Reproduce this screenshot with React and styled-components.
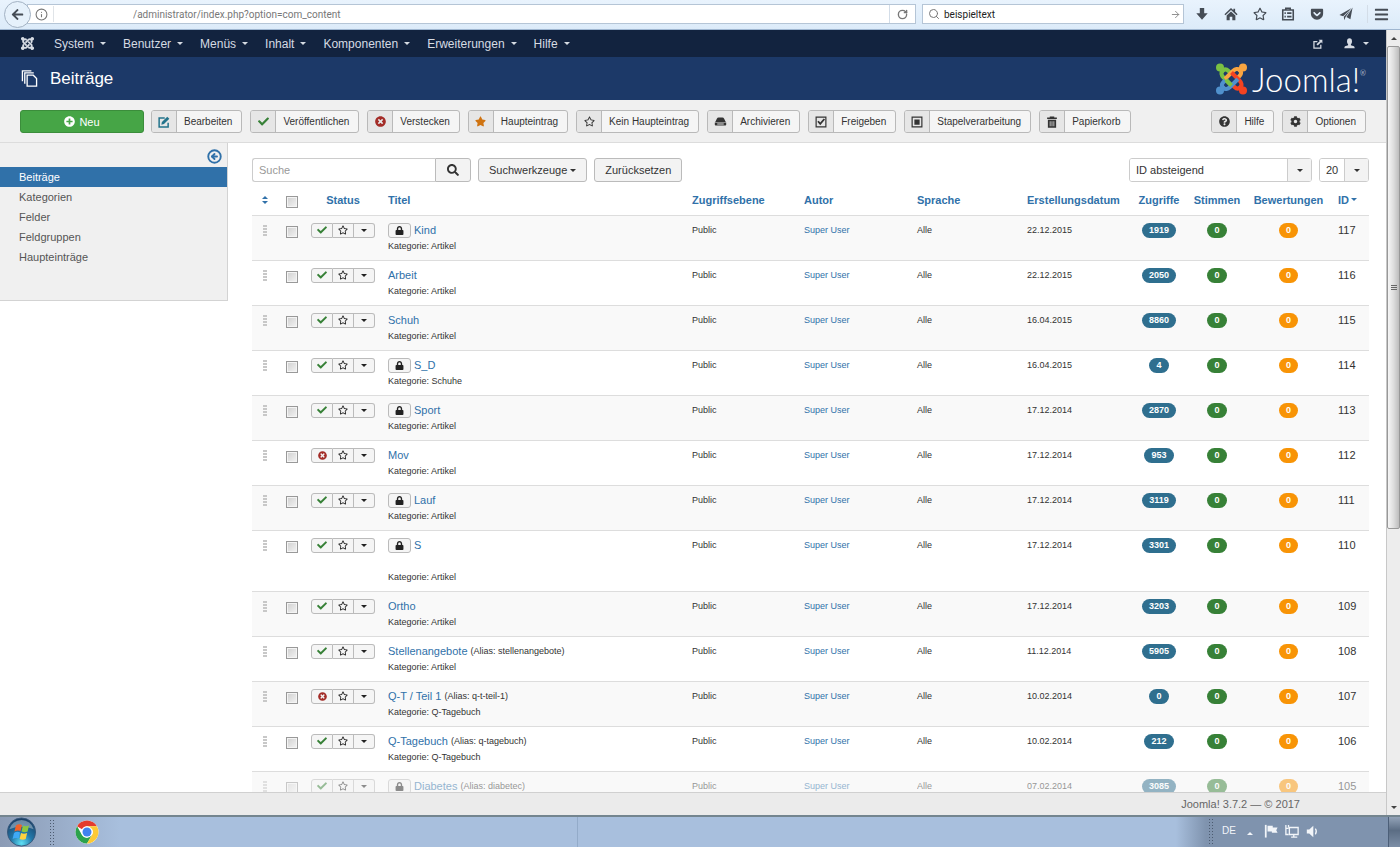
import React from 'react';
import styled, { createGlobalStyle } from 'styled-components';
import {
  FaArrowLeft,
  FaBars,
  FaCheck,
  FaCog,
  FaGetPocket,
  FaJoomla,
  FaLock,
  FaPlusCircle,
  FaQuestionCircle,
  FaRegStar,
  FaSearch,
  FaStar,
  FaTimesCircle,
} from 'react-icons/fa';
import { ArrowRight, CircleArrowLeft, Info, RotateCw, Search } from 'lucide-react';

const GlobalStyle = createGlobalStyle`
  * {
    box-sizing: border-box;
  }

  body {
    margin: 0;
    background: #fff;
    color: #333;
    font: 11px/16px "Liberation Sans", Arial, sans-serif;
  }

  button, input, select {
    margin: 0;
    font: inherit;
    color: inherit;
  }

  a {
    color: #3071a9;
    text-decoration: none;
  }

  svg {
    display: block;
    flex: none;
  }
`;

const Screen = styled.div`
  display: flex;
  flex-direction: column;
  height: 100vh;
  overflow: hidden;
`;

/* browser bar */

const BrowserBar = styled.div`
  display: flex;
  flex: none;
  align-items: center;
  gap: 6px;
  height: 30px;
  padding: 0 5px 1px 4px;
  background: linear-gradient(#e9f3fd, #dcebf9);
  border-bottom: 1px solid #9fb6d0;
  font-family: Roboto, sans-serif;
  font-size: 10px;
`;

const BackButton = styled.button`
  display: flex;
  flex: none;
  align-items: center;
  justify-content: center;
  width: 27px;
  height: 27px;
  padding: 0;
  margin-right: -10px;
  border: 1px solid #a3b2c3;
  border-radius: 50%;
  background: #e6f1fb;
  color: #454c55;
  z-index: 1;
`;

const Field = styled.div`
  display: flex;
  align-items: center;
  flex: ${props => (props.$width ? `0 0 ${props.$width}` : '1')};
  height: 20px;
  padding-left: ${props => (props.$width ? 5 : 7)}px;
  border: 1px solid #b5c5d6;
  background: #fff;
  color: #777;
`;

const FieldInput = styled.input`
  flex: 1;
  min-width: 0;
  height: 18px;
  padding: 0 0 0 ${props => props.$indent}px;
  border: 0;
  background: transparent;
  color: ${props => props.$color};
  outline: 0;
`;

const FieldSplit = styled.span`
  width: 1px;
  height: 16px;
  margin-left: 5px;
  background: #e0e4e8;
`;

const PlainButton = styled.button`
  display: flex;
  align-items: center;
  justify-content: center;
  width: ${props => props.$width || 16}px;
  height: 18px;
  padding: 0;
  border: 0;
  border-left: ${props => (props.$line ? '1px solid #d3dde8' : '0')};
  background: transparent;
  color: ${props => props.$color || '#454c55'};
`;

const BrowserTools = styled.div`
  display: flex;
  align-items: center;
  justify-content: space-between;
  flex: 0 0 205px;
  padding-left: 4px;
`;

/* page frame */

const Viewport = styled.div`
  display: flex;
  flex: 1;
  min-height: 0;
`;

const Page = styled.div`
  display: flex;
  flex: 1;
  flex-direction: column;
  min-width: 0;
`;

const Navbar = styled.nav`
  display: flex;
  flex: none;
  align-items: center;
  height: 27px;
  padding: 0 17px 0 20px;
  background: #12233f;
  color: #d6dbe3;
  font-size: 12px;
`;

const NavItems = styled.ul`
  display: flex;
  flex: 1;
  gap: 17px;
  margin: 0 0 0 19px;
  padding: 0;
  list-style: none;
`;

const NavLink = styled.a`
  display: flex;
  align-items: center;
  gap: ${props => props.$gap || 6}px;
  color: inherit;
`;

const NavRight = styled.div`
  display: flex;
  align-items: center;
  gap: 21px;
`;

const Caret = styled.span`
  width: 0;
  height: 0;
  border: 3px solid transparent;
  border-top-color: currentColor;
  border-bottom: 0;
`;

const Header = styled.header`
  display: flex;
  flex: none;
  align-items: center;
  gap: 12px;
  height: 43px;
  padding: 0 20px 0 21px;
  background: #1c3968;
  color: #fff;
`;

const PageTitle = styled.h1`
  flex: 1;
  margin: 0;
  font-size: 17px;
  font-weight: normal;
  line-height: 24px;
`;

const Brand = styled.div`
  display: flex;
  align-items: center;
  gap: 4px;
`;

const BrandName = styled.span`
  font-family: Lato, sans-serif;
  font-size: 33px;
  font-weight: 300;
  line-height: 34px;

  sup {
    font-size: 7px;
    line-height: 7px;
    vertical-align: 16px;
  }
`;

const Toolbar = styled.div`
  display: flex;
  flex: none;
  gap: 8px;
  height: 43px;
  padding: 10px 20px 9px;
  background: #f0f0f0;
  border-bottom: 1px solid #dcdcdc;
`;

const NewButton = styled.button`
  display: flex;
  align-items: center;
  justify-content: center;
  gap: 4px;
  width: 124px;
  height: 23px;
  margin-right: -1px;
  border: 1px solid #3b8d3b;
  border-radius: 3px;
  background: #46a546;
  color: #fff;
  font-size: 11px;
`;

const ToolButton = styled.button`
  display: flex;
  align-items: stretch;
  height: 23px;
  padding: 0;
  border: 1px solid #b9b9b9;
  border-radius: 3px;
  background: #f5f5f5;
  font-size: 10px;
  line-height: 21px;
  white-space: nowrap;
  overflow: hidden;
`;

const ToolIcon = styled.span`
  display: flex;
  align-items: center;
  justify-content: center;
  width: 25px;
  border-right: 1px solid #b9b9b9;
  background: #e6e6e6;
  color: ${props => props.$color || '#333'};
`;

const ToolText = styled.span`
  padding: 0 9px 0 7px;
`;

const Push = styled.div`
  flex: 1;
`;

const Body = styled.div`
  display: flex;
  flex: 1;
  align-items: flex-start;
  min-height: 0;
  overflow: hidden;
`;

/* sidebar */

const Sidebar = styled.aside`
  flex: 0 0 228px;
  padding-bottom: 33px;
  border: solid #d3d3d3;
  border-width: 0 1px 1px 0;
  background: #f0f0f0;
`;

const SidebarTop = styled.div`
  display: flex;
  justify-content: flex-end;
  height: 24px;
  padding: 4px 5px 0;
`;

const SidebarLink = styled.a`
  display: block;
  padding: 2px 19px;
  background: ${props => (props.$active ? '#3071a9' : 'transparent')};
  color: ${props => (props.$active ? '#fff' : '#555')};
`;

/* list */

const Content = styled.main`
  flex: 1;
  min-width: 0;
  padding: 15px 17px 0 24px;
`;

const Filters = styled.div`
  display: flex;
  gap: 7px;
  height: 28px;
`;

const SearchGroup = styled.div`
  display: flex;
  height: 24px;
`;

const SearchInput = styled.input`
  width: 183px;
  padding: 0 6px;
  border: 1px solid #ccc;
  border-right: 0;
  border-radius: 3px 0 0 3px;
  background: #fff;

  &::placeholder {
    color: #999;
  }
`;

const Button = styled.button`
  display: flex;
  align-items: center;
  justify-content: center;
  gap: 3px;
  height: 24px;
  padding: 0 ${props => (props.$wide ? 11 : 10)}px;
  border: 1px solid #bbb;
  border-radius: ${props => (props.$joined ? '0 3px 3px 0' : '3px')};
  background: #f3f3f3;
`;

const SelectBox = styled.div`
  display: grid;
  width: ${props => props.$width}px;
  height: 24px;
  border: 1px solid #ccc;
  border-radius: 3px;
  overflow: hidden;
`;

const SelectInput = styled.select`
  grid-area: 1 / 1;
  width: 100%;
  padding: 0 6px;
  border: 0;
  background: #fff;
  appearance: none;
`;

const SelectArrow = styled.span`
  grid-area: 1 / 1;
  justify-self: end;
  display: flex;
  align-items: center;
  justify-content: center;
  width: 24px;
  border-left: 1px solid #ccc;
  background: #f3f3f3;
  pointer-events: none;
`;

const Table = styled.table`
  width: 100%;
  border-collapse: collapse;
  table-layout: fixed;
`;

const Th = styled.th`
  height: 29px;
  padding: 0 ${props => (props.$center ? 0 : 8)}px 1px;
  color: #3071a9;
  text-align: ${props => (props.$center ? 'center' : 'left')};
  white-space: nowrap;

  ${Caret} {
    display: inline-block;
    margin-left: 2px;
    vertical-align: 3px;
  }
`;

const Td = styled.td`
  height: 45px;
  padding: 7px ${props => (props.$center ? 0 : 8)}px 6px;
  border-top: 1px solid #ddd;
  font-size: ${props => (props.$large ? 11 : 9)}px;
  line-height: 15px;
  text-align: ${props => (props.$center ? 'center' : 'left')};
  vertical-align: top;
`;

const Row = styled.tr`
  background: ${props => (props.$odd ? '#f9f9f9' : '#fff')};

  ${Td} > * {
    opacity: ${props => (props.$faded ? 0.5 : 1)};
  }
`;

const SortButton = styled(PlainButton)`
  flex-direction: column;
  gap: 2px;
  margin: 0 auto;

  ${Caret}:first-child {
    margin: 0;
    transform: rotate(180deg);
  }

  ${Caret} {
    margin: 0;
  }
`;

const Checkbox = styled.input`
  display: block;
  width: 12px;
  height: 12px;
  margin: ${props => (props.$head ? 5 : 3)}px auto 0;
  border: 1px solid #999;
  background: linear-gradient(135deg, #cfcfcf, #f4f4f4);
  box-shadow: inset 0 0 0 1px #f4f4f4;
  appearance: none;
`;

const Grip = styled.span`
  display: grid;
  gap: 1px;
  width: 4px;
  margin: 2px auto 0;

  i {
    height: 2px;
    background: #c8c8c8;
  }
`;

const StatusGroup = styled.div`
  display: grid;
  grid-template-columns: 22px 21px 21px;
  width: 64px;
  margin-left: -3px;
`;

const MiniButton = styled.button`
  display: flex;
  align-items: center;
  justify-content: center;
  width: ${props => props.$width || 'auto'};
  height: 15px;
  padding: 0;
  border: 1px solid #bbb;
  border-left-width: ${props => (props.$inner ? 0 : 1)}px;
  border-radius: ${props => props.$radius || '3px'};
  background: #f5f5f5;
  color: ${props => props.$color || '#222'};
`;

const TitleLine = styled.div`
  display: flex;
  align-items: center;
  gap: 3px;
  height: 15px;
  font-size: 11px;
  white-space: nowrap;
`;

const Small = styled.span`
  font-size: 9px;
`;

const Category = styled.div`
  padding-top: ${props => (props.$spaced ? 17 : 1)}px;
`;

const Badge = styled.span`
  display: inline-block;
  padding: 0 7px;
  border-radius: 8px;
  background: ${props => props.$color};
  color: #fff;
  font-weight: bold;
  vertical-align: top;
`;

const StatusBar = styled.footer`
  flex: none;
  height: 23px;
  padding: 3px 86px 0;
  border-top: 1px solid #d0d0d0;
  background: #ebebeb;
  color: #666;
  text-align: right;
`;

/* window scrollbar */

const ScrollTrack = styled.div`
  display: flex;
  flex: 0 0 14px;
  flex-direction: column;
  align-items: center;
  border-left: 1px solid #c8c8c8;
  background: #ededed;
  color: #444;
`;

const ScrollArrow = styled.span`
  display: flex;
  align-items: center;
  justify-content: center;
  height: 16px;

  ${Caret} {
    transform: ${props => (props.$up ? 'rotate(180deg)' : 'none')};
  }
`;

const ScrollThumb = styled.div`
  display: flex;
  flex: 64;
  flex-direction: column;
  align-items: center;
  justify-content: center;
  gap: 1px;
  width: 13px;
  border: 1px solid #989898;
  border-radius: 2px;
  background: linear-gradient(90deg, #f6f6f6, #dedede 50%, #bdbdbd);

  i {
    width: 6px;
    height: 1px;
    background: #666;
  }
`;

const ScrollRest = styled.div`
  flex: 36;
`;

/* taskbar */

const Taskbar = styled.div`
  display: flex;
  flex: none;
  align-items: center;
  height: 32px;
  border-top: 2px solid #74858f;
  background: linear-gradient(90deg, #8b9bb5, #a8bfdd 120px);
`;

const TaskGrip = styled.span`
  width: 7px;
  height: 26px;
  background: radial-gradient(circle, #4c5b70 1px, transparent 1px) 0 0 / 3px 3px;
`;

const TaskButton = styled.button`
  display: flex;
  padding: 0;
  border: 0;
  background: transparent;
`;

const TaskApps = styled.div`
  display: flex;
  align-items: center;
  gap: 12px;
  flex: 0 0 578px;
  height: 100%;
  padding-left: 6px;
  border-right: 1px solid #93abc9;

  ${TaskButton}:last-child {
    margin-left: 7px;
  }
`;

const Tray = styled.div`
  display: flex;
  align-items: center;
  gap: 7px;
  width: 212px;
  height: 100%;
  padding: 0 0 2px 32px;
  background: linear-gradient(90deg, transparent, #7f93ae 30px);
  color: #f2f5f9;
  font-size: 10px;

  ${Caret} {
    margin: 4px 4px 0;
    transform: rotate(180deg);
  }
`;

const ShowDesktop = styled.button`
  width: 12px;
  height: 100%;
  padding: 0;
  border: 0;
  border-left: 1px solid #4c5f78;
  background: linear-gradient(#93a3b8, #5b6d84 45%, #7c8ea6);
`;

const Svg = ({ size = 11, box = 16, children, ...rest }) => (
  <svg width={size} height={size} viewBox={`0 0 ${box} ${box}`} fill="currentColor" aria-hidden="true" {...rest}>
    {children}
  </svg>
);

const EditIcon = () => (
  <Svg size={12}>
    <path d="M13.5 9v5.5h-12v-12H9" fill="none" stroke="currentColor" strokeWidth="2" />
    <path d="M4.5 11.5l.7-3.4L12.3 1l2.8 2.7L8 10.8z" />
  </Svg>
);

const DrawerIcon = () => (
  <Svg size={13}>
    <path d="M1.5 8.5l2-4Q4.2 3 5.5 3h5q1.300 0 2 1.500l2 4z" />
    <path fillRule="evenodd" d="M1 9.200h14V12q0 1-1 1H2q-1 0-1-1zM4 10.500v1.200h8v-1.200z" />
  </Svg>
);

const CheckBoxIcon = () => (
  <Svg size={12}>
    <path d="M1.5 1.5h13v13h-13z" fill="none" stroke="currentColor" strokeWidth="1.6" />
    <path d="M4 7l3 3.5L12.5 4" fill="none" stroke="currentColor" strokeWidth="2.4" />
  </Svg>
);

const BatchIcon = () => (
  <Svg size={12}>
    <path d="M1.5 1.5h13v13h-13z" fill="none" stroke="currentColor" strokeWidth="1.6" />
    <path d="M4.5 4.5h7v7h-7z" />
  </Svg>
);

const TrashIcon = () => (
  <Svg size={12}>
    <path d="M1.5 2H5V.5h6V2h3.5v2h-13z" />
    <path fillRule="evenodd" d="M2.5 5h11v10.5h-11zM5 7v6.5h1V7zM7.5 7v6.5h1V7zM10 7v6.500h1V7z" />
  </Svg>
);

const StackIcon = () => (
  <Svg size={17} box={18} fill="none" stroke="currentColor" strokeWidth="1.4">
    <path d="M6.5 5.5H13l3.500 3.500v8h-10z" />
    <path d="M4 14.5V3h9.5M1.5 12V1H11" />
  </Svg>
);

const ExternalIcon = () => (
  <Svg size={10}>
    <path d="M12.5 9v5.5h-11V4H7" fill="none" stroke="currentColor" strokeWidth="2" />
    <path d="M9 1h6v6l-2-2-5.500 5.500L5.500 8.500 11 3z" />
  </Svg>
);

const UserIcon = () => (
  <Svg size={11}>
    <ellipse cx="8" cy="5" rx="3.6" ry="4.5" />
    <path d="M6 8h4v2.500l4.500 1.500q1 .5 1 3H.500q0-2.500 1-3L6 10.500z" />
  </Svg>
);

const DownloadIcon = () => (
  <Svg size={14}>
    <path d="M5.5 1h5v6h4L8 14.5 1.500 7h4z" />
  </Svg>
);

const HomeIcon = () => (
  <Svg size={14}>
    <path d="M8 1l2.700 2.600V2h2v3.500L15.500 8.200l-1.200 1.300L8 3.500 1.700 9.500.5 8.200z" />
    <path d="M8 5l5 4.700V15H9.500v-4h-3v4H3V9.700z" />
  </Svg>
);

const ListIcon = () => (
  <Svg size={14} fill="none" stroke="currentColor" strokeWidth="1.8">
    <path d="M2 3.5h12v11H2zM5.500 3V1.500h5V3M4 7h1.500M7 7h5M4 11h1.500M7 11h5" />
  </Svg>
);

const SendIcon = () => (
  <Svg size={14}>
    <path d="M15.5.5L13 14 8.500 11.500z" />
    <path d="M14.5 1L.5 9l4.300 1.700z" />
    <path d="M5.5 11l8-8.500-6 9L6 15z" />
  </Svg>
);

const JoomlaMark = () => (
  <svg width="33" height="32" viewBox="0 0 32 32" fill="none" strokeWidth="4" aria-hidden="true">
    {[['#7ac143', 0], ['#f9a541', 90], ['#f44321', 180], ['#5091cd', 270]].map(([color, turn]) => (
      <g key={color} transform={`rotate(${turn} 16 16)`} stroke={color}>
        <path d="M14.500 9.500L13 8C10 5 5.500 6.500 6 11C6.200 12.500 7 13.500 8 14.500L16 22.500" />
        <circle cx="4.5" cy="4.5" r="4" fill={color} stroke="none" />
        <path d="M4.5 4.500l4.500 4.500" />
      </g>
    ))}
    <path d="M10.5 17L16 22.500" stroke="#7ac143" />
  </svg>
);

const StartOrb = () => (
  <svg width="31" height="30" viewBox="0 0 32 32" aria-hidden="true">
    <defs>
      <radialGradient id="orb" cx="50%" cy="90%" r="85%">
        <stop offset="0" stopColor="#5fe0f5" />
        <stop offset="0.45" stopColor="#2277a8" />
        <stop offset="1" stopColor="#1d4168" />
      </radialGradient>
    </defs>
    <circle cx="16" cy="16" r="15" fill="url(#orb)" stroke="#38597c" />
    <path d="M3 13a13.5 13.5 0 0 1 26 0q-13-5-26 0z" fill="#fff" opacity="0.35" />
    <path d="M10 9q3-2 6.500-.5L15 15q-3-1.500-6.500.5z" fill="#f0622a" />
    <path d="M17.5 9q3 1.500 6.500 0l-1.500 6.500q-3 1.500-6.500 0z" fill="#8cc63f" />
    <path d="M8 17q3-2 6.500-.5L13 23q-3-1.500-6.500.5z" fill="#3fa9f5" />
    <path d="M15.5 17q3 1.500 6.500 0l-1.500 6.500q-3 1.500-6.500 0z" fill="#ffd23e" />
  </svg>
);

const ChromeLogo = () => (
  <svg width="24" height="24" viewBox="0 0 48 48" aria-hidden="true">
    <circle cx="24" cy="24" r="23" fill="#fff" />
    <path d="M4.1 12.5A23 23 0 0 1 43.9 12.5H24A11.5 11.5 0 0 0 14 18.25z" fill="#e33b2e" />
    <path d="M4.1 12.5L14 29.75A11.5 11.5 0 0 0 24 35.5L34 29.75 24 47A23 23 0 0 1 4.1 12.5z" fill="#2ba24c" />
    <path d="M43.9 12.5A23 23 0 0 1 24 47L34 29.75A11.5 11.5 0 0 0 34 18.25L24 12.5z" fill="#fcc934" />
    <circle cx="24" cy="24" r="11.5" fill="#fff" />
    <circle cx="24" cy="24" r="9" fill="#3f82ee" />
  </svg>
);

const FlagIcon = () => (
  <Svg size={14}>
    <path d="M1 1h2v14.500H1z" />
    <path d="M4 2h6v2h5.500L14 7l1.500 3H9V8.500H4z" />
  </Svg>
);

const NetworkIcon = () => (
  <Svg size={14} fill="none" stroke="currentColor" strokeWidth="1.5">
    <path d="M5 4h10v8H5zM7 15h7M10 12v3M1 1v4h3M1 5v7h3M4 1v3" />
  </Svg>
);

const SpeakerIcon = () => (
  <Svg size={13}>
    <path d="M1 5.5h3L9 1v14l-5-4.500H1z" />
    <path d="M11.5 4.500q2.500 3.500 0 7" fill="none" stroke="currentColor" strokeWidth="1.5" />
  </Svg>
);

const menus = ['System', 'Benutzer', 'Menüs', 'Inhalt', 'Komponenten', 'Erweiterungen', 'Hilfe'];

const tools = [
  ['Bearbeiten', <EditIcon />, '#24748c'],
  ['Veröffentlichen', <FaCheck size={11} />, '#378137'],
  ['Verstecken', <FaTimesCircle size={11} />, '#a32c27'],
  ['Haupteintrag', <FaStar size={11} />, '#cf7311'],
  ['Kein Haupteintrag', <FaRegStar size={11} />],
  ['Archivieren', <DrawerIcon />],
  ['Freigeben', <CheckBoxIcon />],
  ['Stapelverarbeitung', <BatchIcon />],
  ['Papierkorb', <TrashIcon />],
];

const helpTools = [
  ['Hilfe', <FaQuestionCircle size={11} />],
  ['Optionen', <FaCog size={11} />],
];

const sections = ['Beiträge', 'Kategorien', 'Felder', 'Feldgruppen', 'Haupteinträge'];

const articles = [
  { id: 117, title: 'Kind', locked: true, category: 'Artikel', date: '22.12.2015', hits: 1919 },
  { id: 116, title: 'Arbeit', category: 'Artikel', date: '22.12.2015', hits: 2050 },
  { id: 115, title: 'Schuh', category: 'Artikel', date: '16.04.2015', hits: 8860 },
  { id: 114, title: 'S_D', locked: true, category: 'Schuhe', date: '16.04.2015', hits: 4 },
  { id: 113, title: 'Sport', locked: true, category: 'Artikel', date: '17.12.2014', hits: 2870 },
  { id: 112, title: 'Mov', hidden: true, category: 'Artikel', date: '17.12.2014', hits: 953 },
  { id: 111, title: 'Lauf', locked: true, category: 'Artikel', date: '17.12.2014', hits: 3119 },
  { id: 110, title: 'S', locked: true, spaced: true, category: 'Artikel', date: '17.12.2014', hits: 3301 },
  { id: 109, title: 'Ortho', category: 'Artikel', date: '17.12.2014', hits: 3203 },
  { id: 108, title: 'Stellenangebote', alias: 'stellenangebote', category: 'Artikel', date: '11.12.2014', hits: 5905 },
  { id: 107, title: 'Q-T / Teil 1', alias: 'q-t-teil-1', hidden: true, category: 'Q-Tagebuch', date: '10.02.2014', hits: 0 },
  { id: 106, title: 'Q-Tagebuch', alias: 'q-tagebuch', category: 'Q-Tagebuch', date: '10.02.2014', hits: 212 },
  { id: 105, title: 'Diabetes', alias: 'diabetec', locked: true, faded: true, date: '07.02.2014', hits: 3085 },
];

const Tool = ({ label, icon, color }) => (
  <ToolButton type="button">
    <ToolIcon $color={color}>{icon}</ToolIcon>
    <ToolText>{label}</ToolText>
  </ToolButton>
);

const Select = ({ label, width, value }) => (
  <SelectBox $width={width}>
    <SelectInput aria-label={label} defaultValue={value}>
      <option>{value}</option>
    </SelectInput>
    <SelectArrow><Caret /></SelectArrow>
  </SelectBox>
);

const ArticleRow = ({ article, odd }) => (
  <Row $odd={odd} $faded={article.faded}>
    <Td $center><Grip><i /><i /><i /><i /></Grip></Td>
    <Td $center><Checkbox type="checkbox" aria-label={`${article.title} auswählen`} /></Td>
    <Td>
      <StatusGroup>
        <MiniButton type="button" aria-label="Status" $radius="3px 0 0 3px" $color={article.hidden ? '#a32c27' : '#378137'}>
          {article.hidden ? <FaTimesCircle size={9} /> : <FaCheck size={10} />}
        </MiniButton>
        <MiniButton type="button" aria-label="Haupteintrag" $inner $radius="0"><FaRegStar size={10} /></MiniButton>
        <MiniButton type="button" aria-label="Aktionen" $inner $radius="0 3px 3px 0"><Caret /></MiniButton>
      </StatusGroup>
    </Td>
    <Td>
      <TitleLine>
        {article.locked && (
          <MiniButton type="button" aria-label="Freigeben" $width="23px"><FaLock size={9} /></MiniButton>
        )}
        <a href="#article">{article.title}</a>
        {article.alias && <Small>(Alias: {article.alias})</Small>}
      </TitleLine>
      {article.category && <Category $spaced={article.spaced}>Kategorie: {article.category}</Category>}
    </Td>
    <Td><span>Public</span></Td>
    <Td><a href="#user">Super User</a></Td>
    <Td><span>Alle</span></Td>
    <Td><span>{article.date}</span></Td>
    <Td $center><Badge $color="#2f6f8f">{article.hits}</Badge></Td>
    <Td $center><Badge $color="#378137">0</Badge></Td>
    <Td $center><Badge $color="#f89406">0</Badge></Td>
    <Td $large><span>{article.id}</span></Td>
  </Row>
);

const BrowserChrome = () => (
  <BrowserBar>
    <BackButton type="button" aria-label="Zurück"><FaArrowLeft size={13} /></BackButton>
    <Field>
      <Info size={13} strokeWidth={2} />
      <FieldSplit />
      <FieldInput
        aria-label="Adresse"
        $indent={79}
        $color="#777"
        defaultValue="/administrator/index.php?option=com_content"
      />
      <PlainButton type="button" aria-label="Neu laden" $width={26} $line $color="#777"><RotateCw size={11} strokeWidth={3} /></PlainButton>
    </Field>
    <Field $width="262px">
      <Search size={12} />
      <FieldInput aria-label="Suchen" $indent={4} $color="#222" defaultValue="beispieltext" />
      <PlainButton type="button" aria-label="Suche starten" $color="#888"><ArrowRight size={11} /></PlainButton>
    </Field>
    <BrowserTools>
      <PlainButton type="button" aria-label="Downloads"><DownloadIcon /></PlainButton>
      <PlainButton type="button" aria-label="Startseite"><HomeIcon /></PlainButton>
      <PlainButton type="button" aria-label="Lesezeichen"><FaRegStar size={14} /></PlainButton>
      <PlainButton type="button" aria-label="Liste"><ListIcon /></PlainButton>
      <PlainButton type="button" aria-label="Pocket"><FaGetPocket size={14} /></PlainButton>
      <PlainButton type="button" aria-label="Senden"><SendIcon /></PlainButton>
      <PlainButton type="button" aria-label="Menü" $width={28} $line><FaBars size={15} /></PlainButton>
    </BrowserTools>
  </BrowserBar>
);

const ArticleList = () => (
  <Content>
    <Filters>
      <SearchGroup>
        <SearchInput aria-label="Suche" placeholder="Suche" />
        <Button type="button" aria-label="Suchen" $wide $joined><FaSearch size={12} /></Button>
      </SearchGroup>
      <Button type="button">Suchwerkzeuge<Caret /></Button>
      <Button type="button">Zurücksetzen</Button>
      <Push />
      <Select label="Sortierung" width={183} value="ID absteigend" />
      <Select label="Anzahl" width={50} value="20" />
    </Filters>
    <Table>
      <colgroup>
        <col width="26" />
        <col width="28" />
        <col width="74" />
        <col />
        <col width="112" />
        <col width="113" />
        <col width="110" />
        <col width="112" />
        <col width="56" />
        <col width="60" />
        <col width="83" />
        <col width="39" />
      </colgroup>
      <thead>
        <tr>
          <Th $center><SortButton type="button" aria-label="Reihenfolge" $color="#3071a9"><Caret /><Caret /></SortButton></Th>
          <Th $center><Checkbox type="checkbox" $head aria-label="Alle auswählen" /></Th>
          <Th $center>Status</Th>
          <Th>Titel</Th>
          <Th>Zugriffsebene</Th>
          <Th>Autor</Th>
          <Th>Sprache</Th>
          <Th>Erstellungsdatum</Th>
          <Th $center>Zugriffe</Th>
          <Th $center>Stimmen</Th>
          <Th $center>Bewertungen</Th>
          <Th>ID<Caret /></Th>
        </tr>
      </thead>
      <tbody>
        {articles.map((article, index) => (
          <ArticleRow key={article.id} article={article} odd={index % 2 === 0} />
        ))}
      </tbody>
    </Table>
  </Content>
);

class App extends React.Component {
  render() {
    return (
      <Screen>
        <GlobalStyle />
        <BrowserChrome />
        <Viewport>
          <Page>
            <Navbar>
              <FaJoomla size={15} />
              <NavItems>
                {menus.map(menu => (
                  <li key={menu}><NavLink href="#menu">{menu}<Caret /></NavLink></li>
                ))}
              </NavItems>
              <NavRight>
                <ExternalIcon />
                <NavLink href="#profile" aria-label="Profil" $gap={8}><UserIcon /><Caret /></NavLink>
              </NavRight>
            </Navbar>
            <Header>
              <StackIcon />
              <PageTitle>Beiträge</PageTitle>
              <Brand>
                <JoomlaMark />
                <BrandName>Joomla!<sup>®</sup></BrandName>
              </Brand>
            </Header>
            <Toolbar>
              <NewButton type="button"><FaPlusCircle size={11} />Neu</NewButton>
              {tools.map(([label, icon, color]) => (
                <Tool key={label} label={label} icon={icon} color={color} />
              ))}
              <Push />
              {helpTools.map(([label, icon]) => (
                <Tool key={label} label={label} icon={icon} />
              ))}
            </Toolbar>
            <Body>
              <Sidebar>
                <SidebarTop>
                  <PlainButton type="button" aria-label="Seitenleiste ausblenden" $color="#3071a9">
                    <CircleArrowLeft size={15} strokeWidth={3} />
                  </PlainButton>
                </SidebarTop>
                {sections.map((section, index) => (
                  <SidebarLink key={section} href="#section" $active={index === 0}>{section}</SidebarLink>
                ))}
              </Sidebar>
              <ArticleList />
            </Body>
            <StatusBar>Joomla! 3.7.2 — © 2017</StatusBar>
          </Page>
          <ScrollTrack>
            <ScrollArrow $up><Caret /></ScrollArrow>
            <ScrollThumb><i /><i /><i /></ScrollThumb>
            <ScrollRest />
            <ScrollArrow><Caret /></ScrollArrow>
          </ScrollTrack>
        </Viewport>
        <Taskbar>
          <TaskApps>
            <TaskButton type="button" aria-label="Start"><StartOrb /></TaskButton>
            <TaskGrip />
            <TaskButton type="button" aria-label="Chrome"><ChromeLogo /></TaskButton>
          </TaskApps>
          <Push />
          <Tray>
            <TaskGrip />
            <span>DE</span>
            <Caret />
            <FlagIcon />
            <NetworkIcon />
            <SpeakerIcon />
          </Tray>
          <ShowDesktop type="button" aria-label="Desktop anzeigen" />
        </Taskbar>
      </Screen>
    );
  }
}

export default App;
